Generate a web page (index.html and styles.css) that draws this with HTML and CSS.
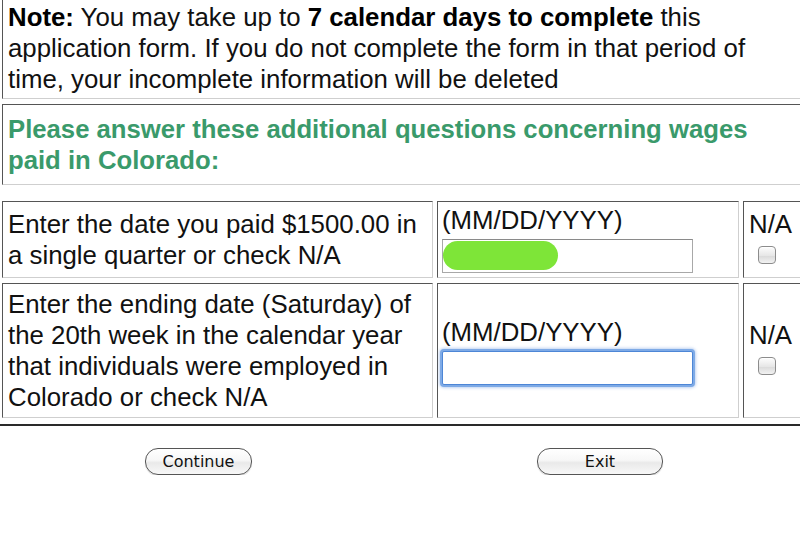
FILE: index.html
```html
<!DOCTYPE html>
<html>
<head>
<meta charset="utf-8">
<link rel="stylesheet" href="styles.css">
</head>
<body>
<div class="page">
  <div class="box note">
    <b>Note:</b> You may take up to <b>7 calendar days to complete</b> this application form. If you do not complete the form in that period of time, your incomplete information will be deleted
  </div>
  <div class="box heading">
    Please answer these additional questions concerning wages paid in Colorado:
  </div>
  <div class="questions">
    <div class="grid">
      <div class="cell q">Enter the date you paid $1500.00 in a single quarter or check N/A</div>
      <div class="cell field top">
        <div class="label">(MM/DD/YYYY)</div>
        <div class="input-wrap">
          <input class="date" type="text">
          <span class="blob"></span>
        </div>
      </div>
      <div class="cell na">
        <div>N/A</div>
        <input class="check" type="checkbox">
      </div>

      <div class="cell q">Enter the ending date (Saturday) of the 20th week in the calendar year that individuals were employed in Colorado or check N/A</div>
      <div class="cell field">
        <div class="label">(MM/DD/YYYY)</div>
        <div class="input-wrap">
          <input class="date focus" type="text">
        </div>
      </div>
      <div class="cell na">
        <div>N/A</div>
        <input class="check" type="checkbox">
      </div>
    </div>
  </div>
  <div class="actions">
    <div class="action"><button class="btn btn-continue" type="button">Continue</button></div>
    <div class="action"><button class="btn btn-exit" type="button">Exit</button></div>
  </div>
</div>
</body>
</html>
```
FILE: styles.css
```css
html, body {
  margin: 0;
  padding: 0;
  background: #fff;
  overflow: hidden;
}
body {
  font-family: "Liberation Sans", Arial, sans-serif;
  font-size: 25.8px;
  line-height: 31px;
  color: #111;
}
.page {
  width: 830px;
}
.box {
  box-sizing: border-box;
  width: 826px;
  margin-left: 2px;
  border-top: 1px solid #555;
  border-left: 1px solid #555;
  border-bottom: 1px solid #cfcfcf;
  border-right: 1px solid #cfcfcf;
}
.note {
  margin-top: -4px;
  padding: 5px 40px 3px 5px;
}
.note b {
  color: #000;
}
.heading {
  margin-top: 5px;
  padding: 9px 40px 8px 5px;
  color: #3a9a6b;
  font-weight: bold;
  font-size: 25.7px;
}
.questions {
  margin-top: 16px;
  padding-bottom: 6px;
  border-bottom: 2px solid #2a2a2a;
}
.grid {
  display: grid;
  grid-template-columns: 431px 302px 1fr;
  grid-template-rows: 77px 135px;
  column-gap: 4px;
  row-gap: 5px;
  margin-left: 2px;
}
.cell {
  border-top: 1px solid #555;
  border-left: 1px solid #555;
  border-bottom: 1px solid #cfcfcf;
  border-right: 1px solid #cfcfcf;
  padding: 3px 5px 3px 5px;
  display: flex;
  flex-direction: column;
  justify-content: center;
}
.field {
  padding-left: 4px;
}
.field.top {
  justify-content: flex-start;
}
.input-wrap {
  position: relative;
  margin-top: 3px;
  width: 251px;
  height: 34px;
}
.date {
  box-sizing: border-box;
  display: block;
  width: 251px;
  height: 34px;
  margin: 0;
  padding: 0 4px;
  border: 1px solid #a8a8a8;
  border-top-color: #8a8a8a;
  background: #fff;
  font: inherit;
  outline: none;
}
.date.focus {
  border: 1px solid #4d86d6;
  border-radius: 2px;
  box-shadow: 0 0 0 2px #7eaae6, 0 0 3px 3px rgba(110, 155, 225, 0.45);
}
.blob {
  position: absolute;
  left: 1px;
  top: 2px;
  width: 115px;
  height: 29px;
  border-radius: 15px;
  background: #7ee538;
}
.na {
  align-items: flex-start;
}
.check {
  appearance: none;
  -webkit-appearance: none;
  box-sizing: border-box;
  width: 18px;
  height: 18px;
  margin: 6px 0 7px 9px;
  border: 1px solid #8c8c8c;
  border-radius: 4px;
  background: linear-gradient(#fdfdfd, #e6e6e6 55%, #dadada 56%, #f2f2f2);
  box-shadow: inset 0 1px 0 #fff;
}
.actions {
  display: grid;
  grid-template-columns: 400px 400px;
  padding-top: 22px;
}
.action {
  display: flex;
  justify-content: center;
}
.btn {
  box-sizing: border-box;
  height: 27px;
  border: 1px solid #555;
  border-radius: 13px;
  background: linear-gradient(#ffffff, #f7f7f7 45%, #e9e9e9 55%, #f8f8f8);
  box-shadow: 0 1px 1px rgba(0, 0, 0, 0.15);
  font-family: "DejaVu Sans", Verdana, sans-serif;
  font-size: 16px;
  line-height: 23px;
  color: #111;
  padding: 0;
}
.btn-continue {
  width: 107px;
  margin-left: -3px;
}
.btn-exit {
  width: 126px;
}
```
